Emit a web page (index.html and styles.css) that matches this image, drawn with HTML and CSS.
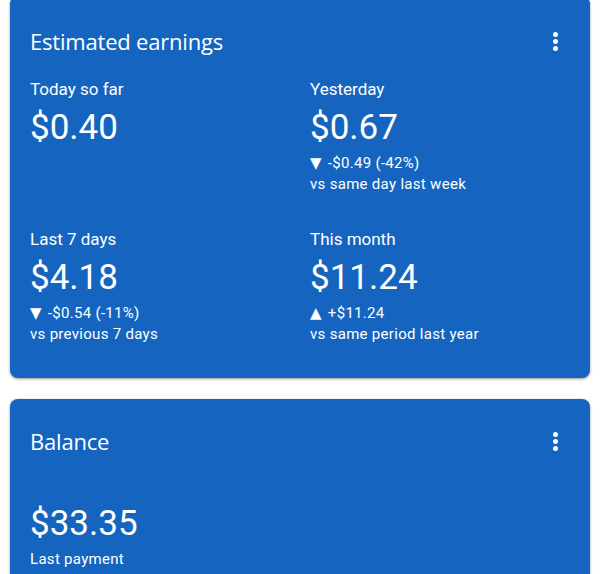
FILE: index.html
```html
<!DOCTYPE html>
<html lang="en">
<head>
    <meta charset="UTF-8">
    <meta name="viewport" content="width=device-width, initial-scale=1.0">
    <title>Earnings</title>
    <link rel="stylesheet" href="styles.css">
</head>
<body>
    <div class="list">
        <div class="card card-first">
            <div class="card-head">
                <h2>Estimated earnings</h2>
                <span class="more"><i></i><i></i><i></i></span>
            </div>
            <div class="stats">
                <div class="stat">
                    <p class="label">Today so far</p>
                    <p class="amount">$0.40</p>
                </div>
                <div class="stat">
                    <p class="label">Yesterday</p>
                    <p class="amount">$0.67</p>
                    <p class="change"><span class="arrow">&#9660;</span>-$0.49 (-42%)</p>
                    <p class="change">vs same day last week</p>
                </div>
                <div class="stat">
                    <p class="label">Last 7 days</p>
                    <p class="amount">$4.18</p>
                    <p class="change"><span class="arrow">&#9660;</span>-$0.54 (-11%)</p>
                    <p class="change">vs previous 7 days</p>
                </div>
                <div class="stat">
                    <p class="label">This month</p>
                    <p class="amount">$11.24</p>
                    <p class="change"><span class="arrow">&#9650;</span>+$11.24</p>
                    <p class="change">vs same period last year</p>
                </div>
            </div>
        </div>

        <div class="card">
            <div class="card-head head-tight">
                <h2>Balance</h2>
                <span class="more"><i></i><i></i><i></i></span>
            </div>
            <div class="balance">
                <p class="amount">$33.35</p>
                <p class="change">Last payment</p>
            </div>
        </div>
    </div>
</body>
</html>
```

FILE: styles.css
```css
* {
    margin: 0;
    padding: 0;
    box-sizing: border-box;
}

body {
    background: #fff;
    font-family: Roboto, "Noto Sans", sans-serif;
    color: #fff;
    overflow: hidden;
}

.list {
    padding: 0 10px;
    display: flex;
    flex-direction: column;
    gap: 21px;
}

.card {
    background: #1565c0;
    border-radius: 8px;
    box-shadow: 0 1px 3px rgba(0, 0, 0, 0.3), 0 1px 2px rgba(0, 0, 0, 0.15);
    padding: 0 20px;
}

/* page is scrolled a few pixels */
.card-first {
    margin-top: -4px;
    padding-bottom: 17px;
}

.card-head {
    display: flex;
    justify-content: space-between;
    align-items: center;
    height: 81px;
    padding-top: 9px;
}

.head-tight {
    padding-top: 5px;
    height: 79px;
}

h2 {
    font-family: "Open Sans", Roboto, sans-serif;
    font-weight: 400;
    font-size: 22px;
    letter-spacing: -0.2px;
}

.more {
    display: flex;
    flex-direction: column;
    gap: 2px;
    margin-right: 12px;
}

.more i {
    display: block;
    width: 5px;
    height: 5px;
    border-radius: 50%;
    background: #fff;
}

.stats {
    display: grid;
    grid-template-columns: 280px 1fr;
    row-gap: 16px;
}

.stat {
    min-height: 134px;
}

.label {
    font-size: 17px;
    line-height: 24px;
}

.amount {
    font-size: 35px;
    line-height: 46px;
    margin-top: 4px;
    margin-bottom: 2px;
}

.change {
    font-size: 15px;
    line-height: 21px;
    letter-spacing: 0.3px;
}

.arrow {
    display: inline-block;
    font-family: "DejaVu Sans", sans-serif;
    font-size: 15px;
    line-height: 1;
    margin-right: 6px;
}

.balance {
    padding-top: 19px;
    padding-bottom: 20px;
}
```
